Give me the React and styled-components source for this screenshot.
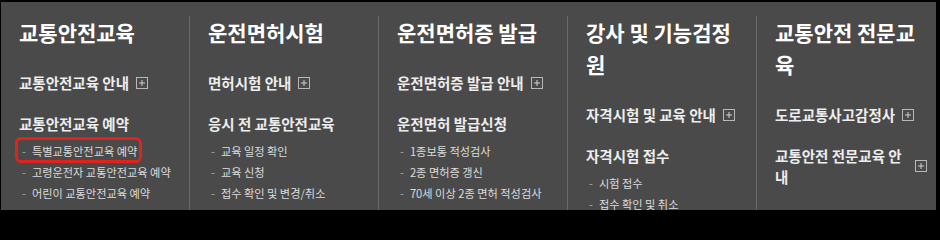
import * as React from "react";
import styled, { createGlobalStyle } from "styled-components";

const GlobalStyle = createGlobalStyle`
  html, body {
    margin: 0;
    padding: 0;
    background: #000;
  }
  body {
    font-family: "Noto Sans CJK KR", "Noto Sans", sans-serif;
  }
`;

const Frame = styled.div`
  width: 940px;
  height: 213px;
  box-sizing: border-box;
  padding: 2px 4px 3px 1px;
  background: #000;
`;

const Panel = styled.nav`
  display: grid;
  grid-template-columns: repeat(5, 189px);
  height: 100%;
  padding-top: 14px;
  box-sizing: border-box;
  background: #4a4a4a;
  overflow: hidden;
`;

const Column = styled.section`
  box-sizing: border-box;
  padding: 0 18px;
  border-right: 1px solid #6a6a6a;
`;

const Title = styled.h2`
  margin: 0 0 24px;
  font-size: 21px;
  line-height: 32px;
  font-weight: 700;
  color: #fff;
`;

const Groups = styled.div`
  display: flex;
  flex-direction: column;
  gap: 20px;
`;

const SubLink = styled.div`
  display: flex;
  align-items: center;
  gap: 7px;
  font-size: 14.5px;
  line-height: 21px;
  font-weight: 700;
  color: #ededed;
`;

const SubList = styled.ul`
  list-style: none;
  margin: -13px 0 0;
  padding: 0;
`;

const Item = styled.li`
  position: relative;
  width: max-content;
  padding-left: 3px;
  font-size: 11.2px;
  line-height: 21px;
  color: #dcdcdc;

  &::before {
    content: "-";
    color: #a8a8a8;
    margin-right: 6px;
  }

  ${({ $marked }) =>
    $marked &&
    `
    &::after {
      content: "";
      position: absolute;
      top: -4px;
      bottom: -1px;
      left: -4px;
      right: -5px;
      border: 3px solid #e0231c;
      border-radius: 6px;
    }
  `}
`;

const PlusBox = () => (
  <svg width="12" height="12" viewBox="0 0 12 12" style={{ flex: "none" }}>
    <rect x="0.5" y="0.5" width="11" height="11" fill="none" stroke="#b8b8b8" />
    <path d="M6 3v6M3 6h6" stroke="#d0d0d0" strokeWidth="1" />
  </svg>
);

const menu = [
  {
    title: "교통안전교육",
    links: [
      { label: "교통안전교육 안내", plus: true },
      {
        label: "교통안전교육 예약",
        items: [
          { label: "특별교통안전교육 예약", marked: true },
          { label: "고령운전자 교통안전교육 예약" },
          { label: "어린이 교통안전교육 예약" },
        ],
      },
    ],
  },
  {
    title: "운전면허시험",
    links: [
      { label: "면허시험 안내", plus: true },
      {
        label: "응시 전 교통안전교육",
        items: [
          { label: "교육 일정 확인" },
          { label: "교육 신청" },
          { label: "접수 확인 및 변경/취소" },
        ],
      },
    ],
  },
  {
    title: "운전면허증 발급",
    links: [
      { label: "운전면허증 발급 안내", plus: true },
      {
        label: "운전면허 발급신청",
        items: [
          { label: "1종보통 적성검사" },
          { label: "2종 면허증 갱신" },
          { label: "70세 이상 2종 면허 적성검사" },
        ],
      },
    ],
  },
  {
    title: "강사 및 기능검정원",
    links: [
      { label: "자격시험 및 교육 안내", plus: true },
      {
        label: "자격시험 접수",
        items: [{ label: "시험 접수" }, { label: "접수 확인 및 취소" }],
      },
    ],
  },
  {
    title: "교통안전 전문교육",
    links: [
      { label: "도로교통사고감정사", plus: true },
      { label: "교통안전 전문교육 안내", plus: true },
    ],
  },
];

export default function App() {
  return (
    <>
      <GlobalStyle />
      <Frame>
        <Panel>
          {menu.map((col) => (
            <Column key={col.title}>
              <Title>{col.title}</Title>
              <Groups>
                {col.links.map((link) => (
                  <React.Fragment key={link.label}>
                    <SubLink>
                      <span>{link.label}</span>
                      {link.plus && <PlusBox />}
                    </SubLink>
                    {link.items && (
                      <SubList>
                        {link.items.map((it) => (
                          <Item key={it.label} $marked={it.marked}>
                            {it.label}
                          </Item>
                        ))}
                      </SubList>
                    )}
                  </React.Fragment>
                ))}
              </Groups>
            </Column>
          ))}
        </Panel>
      </Frame>
    </>
  );
}
